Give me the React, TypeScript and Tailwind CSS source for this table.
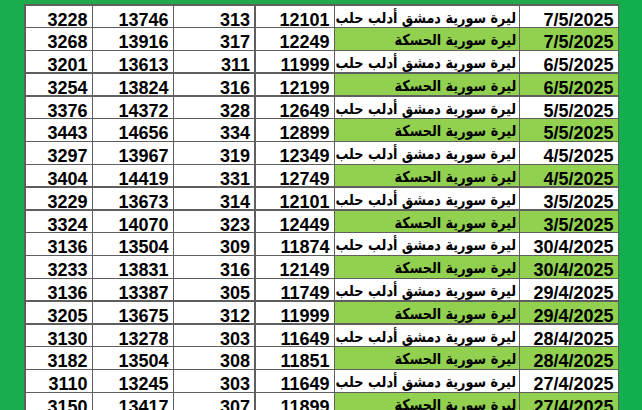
const DAMASCUS = 'ليرة سورية دمشق أدلب حلب'
const HASAKAH = 'ليرة سورية الحسكة'

type Row = { date: string; label: string; a: string; b: string; c: string; d: string; green: boolean }

const raw: [string, boolean, string, string, string, string][] = [
  ['7/5/2025', false, '12101', '313', '13746', '3228'],
  ['7/5/2025', true, '12249', '317', '13916', '3268'],
  ['6/5/2025', false, '11999', '311', '13613', '3201'],
  ['6/5/2025', true, '12199', '316', '13824', '3254'],
  ['5/5/2025', false, '12649', '328', '14372', '3376'],
  ['5/5/2025', true, '12899', '334', '14656', '3443'],
  ['4/5/2025', false, '12349', '319', '13967', '3297'],
  ['4/5/2025', true, '12749', '331', '14419', '3404'],
  ['3/5/2025', false, '12101', '314', '13673', '3229'],
  ['3/5/2025', true, '12449', '323', '14070', '3324'],
  ['30/4/2025', false, '11874', '309', '13504', '3136'],
  ['30/4/2025', true, '12149', '316', '13831', '3233'],
  ['29/4/2025', false, '11749', '305', '13387', '3136'],
  ['29/4/2025', true, '11999', '312', '13675', '3205'],
  ['28/4/2025', false, '11649', '303', '13278', '3130'],
  ['28/4/2025', true, '11851', '308', '13504', '3182'],
  ['27/4/2025', false, '11649', '303', '13245', '3110'],
  ['27/4/2025', true, '11899', '307', '13417', '3150'],
]

const rows: Row[] = raw.map(([date, green, a, b, c, d]) => ({
  date,
  green,
  label: green ? HASAKAH : DAMASCUS,
  a,
  b,
  c,
  d,
}))

const font = { fontFamily: '"Liberation Sans", "DejaVu Sans", Arial, sans-serif' }
const arabicFont = { fontFamily: '"DejaVu Sans Condensed", "DejaVu Sans", sans-serif' }

function Num({ children, green }: { children: string; green?: boolean }) {
  return (
    <div
      className={
        'whitespace-nowrap pr-[4px] pt-[5px] text-right text-[18px] font-bold leading-none text-black ' +
        (green ? 'bg-[#92d050]' : 'bg-white')
      }
    >
      {children}
    </div>
  )
}

function Label({ children, green }: { children: string; green?: boolean }) {
  return (
    <div
      dir="rtl"
      className={
        'whitespace-nowrap pr-[2px] pt-[5px] text-right text-[15px] font-bold leading-none text-black ' +
        (green ? 'bg-[#92d050]' : 'bg-white')
      }
      style={arabicFont}
    >
      <span className="inline-block origin-right scale-x-[0.95]">{children}</span>
    </div>
  )
}

export default function App() {
  return (
    <div className="flex h-[410px] w-[642px] overflow-hidden bg-[#1bae4e]" style={font}>
      {/* left green bar */}
      <div className="w-[24px] shrink-0 bg-[#1bae4e]" />

      <div className="flex w-[595px] shrink-0 flex-col bg-[#22a94b]">
        <div className="h-[4px] shrink-0" />
        <div className="grid grid-cols-[66px_79.5px_80px_78px_183.5px_97.5px] auto-rows-[21.3px] gap-[1.5px] bg-[#5f5f5f] p-[1.5px] pb-0">
          {rows.map((r, i) => (
            <div key={i} className="contents">
              <Num>{r.d}</Num>
              <Num>{r.c}</Num>
              <Num>{r.b}</Num>
              <Num>{r.a}</Num>
              <Label green={r.green}>{r.label}</Label>
              <Num green={r.green}>{r.date}</Num>
            </div>
          ))}
        </div>
      </div>

      {/* right green bar */}
      <div className="flex-1 bg-[#12b04c]" />
    </div>
  )
}
